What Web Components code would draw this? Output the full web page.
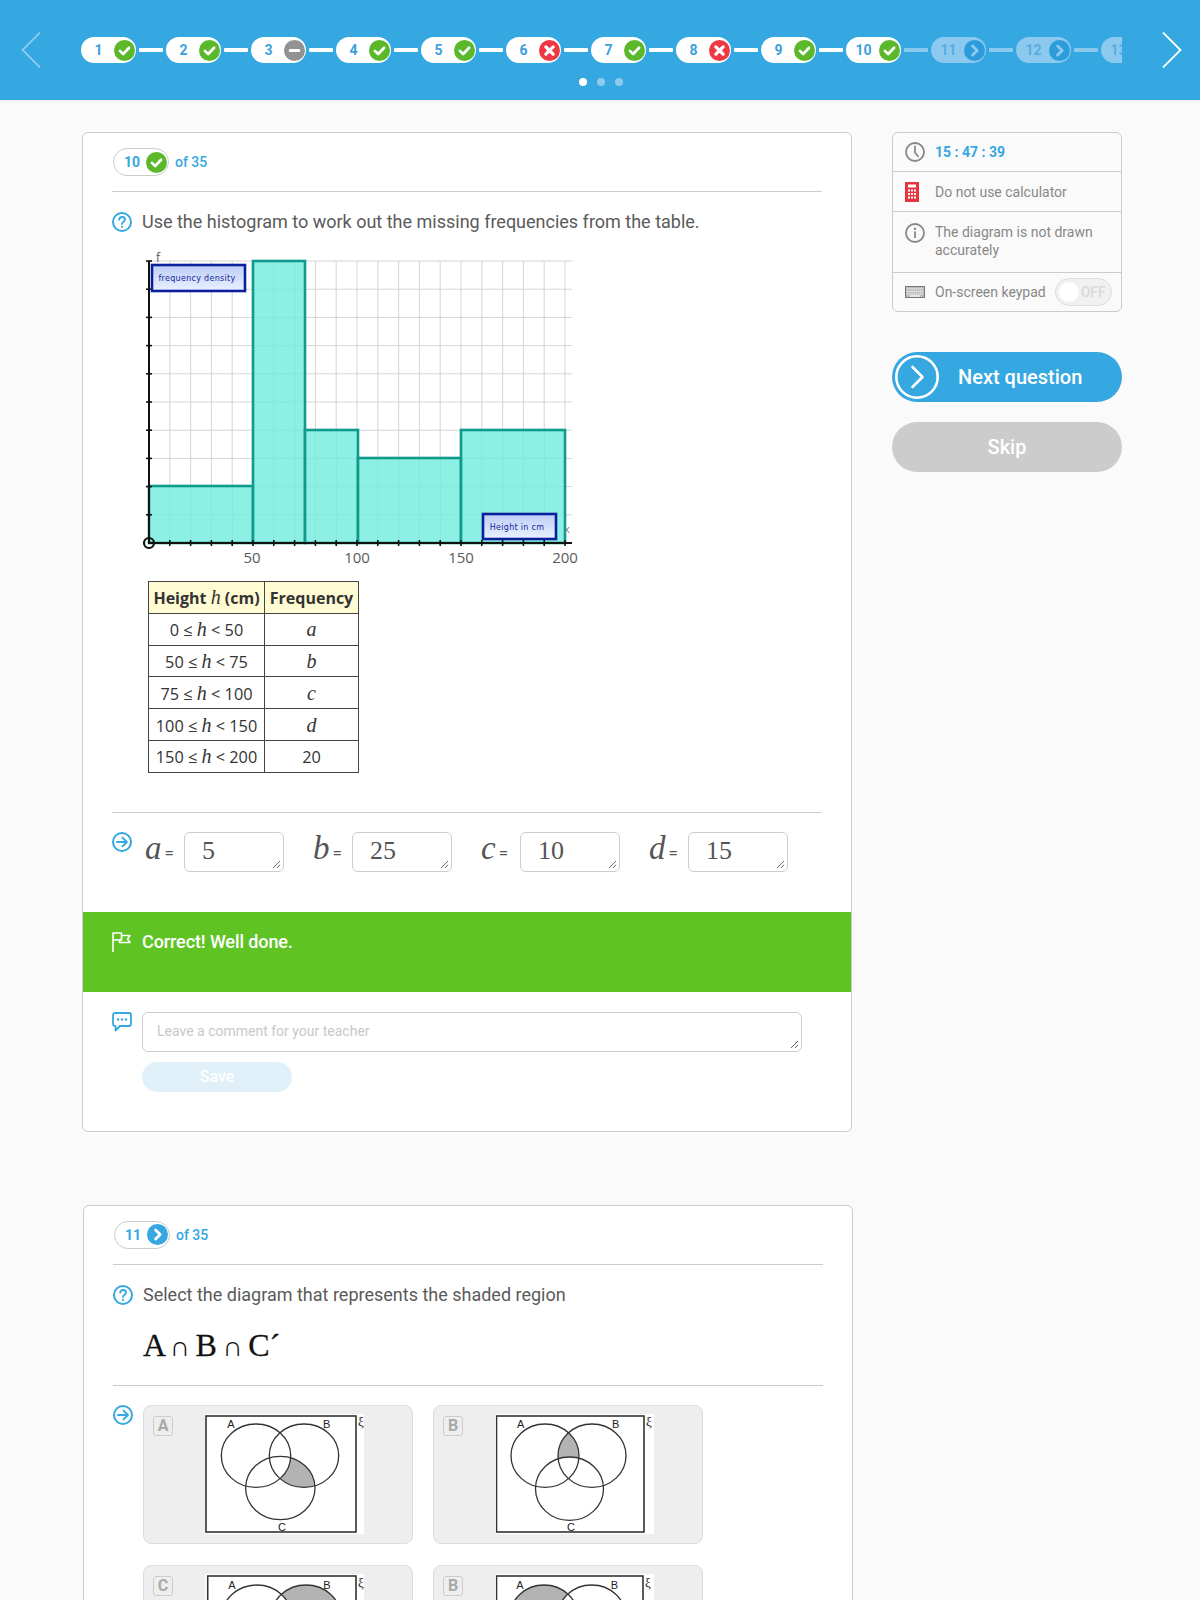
<!DOCTYPE html>
<html lang="en">
<head>
<meta charset="utf-8">
<title>Quiz</title>
<style>
html,body{margin:0;padding:0;height:1600px;overflow:hidden;background:#fafafa;font-family:Roboto,"Liberation Sans",sans-serif;color:#555}
</style>
</head>
<body>
<quiz-header>
  <step-pill n="1" state="ok"></step-pill><step-link></step-link>
  <step-pill n="2" state="ok"></step-pill><step-link></step-link>
  <step-pill n="3" state="skip"></step-pill><step-link></step-link>
  <step-pill n="4" state="ok"></step-pill><step-link></step-link>
  <step-pill n="5" state="ok"></step-pill><step-link></step-link>
  <step-pill n="6" state="bad"></step-pill><step-link></step-link>
  <step-pill n="7" state="ok"></step-pill><step-link></step-link>
  <step-pill n="8" state="bad"></step-pill><step-link></step-link>
  <step-pill n="9" state="ok"></step-pill><step-link></step-link>
  <step-pill n="10" state="ok"></step-pill><step-link faded></step-link>
  <step-pill n="11" state="next"></step-pill><step-link faded></step-link>
  <step-pill n="12" state="next"></step-pill><step-link faded></step-link>
  <step-pill n="13" state="next"></step-pill>
</quiz-header>

<quiz-page>
  <div slot="main">
    <question-card n="10" state="ok">
      <q-line>Use the histogram to work out the missing frequencies from the table.</q-line>
      <histogram-chart></histogram-chart>
      <freq-table></freq-table>
      <q-rule style="margin-top:39px"></q-rule>
      <answer-row>
        <answer-field label="a" value="5"></answer-field>
        <answer-field label="b" value="25"></answer-field>
        <answer-field label="c" value="10"></answer-field>
        <answer-field label="d" value="15"></answer-field>
      </answer-row>
      <feedback-band>Correct! Well done.</feedback-band>
      <comment-box></comment-box>
    </question-card>
    <question-card n="11" state="next" style="margin:73px 0 0 1px">
      <q-line>Select the diagram that represents the shaded region</q-line>
      <set-formula>A <span>∩</span> B <span>∩</span> C´</set-formula>
      <q-rule></q-rule>
      <option-grid>
        <venn-option letter="A" shade="bc-a" left="62" w="159" rect="1 2 150 116" a="51 41.7" b="99 41.7" c="75.3 74" rx="34.7" la="26 14" lb="121.7 14" lc="77 117" lx="156 12"></venn-option>
        <venn-option letter="B" shade="ab-c" left="63" w="158" rect="0.5 2 147.5 116" a="49 41.7" b="96 41.7" c="73.5 74.7" rx="34" la="24.7 14" lb="119.7 14" lc="75 117" lx="153 12"></venn-option>
        <venn-option letter="C" shade="b-ac" left="62" w="159" rect="2.7 2 148.3 116" a="51.7 42.7" b="101 42.7" c="77 75" rx="34.7" la="27 15" lb="122 15" lx="156 13"></venn-option>
        <venn-option letter="B" shade="a-bc" left="63" w="158" rect="0.5 2 146.5 116" a="48 42.7" b="95.7 42.7" c="73 75" rx="34" la="24 15" lb="118.3 15" lx="152 13"></venn-option>
      </option-grid>
    </question-card>
  </div>
  <div slot="side">
    <info-panel></info-panel>
    <big-button kind="next" style="margin-top:40px">Next question</big-button>
    <big-button kind="skip" style="margin-top:20px">Skip</big-button>
  </div>
</quiz-page>

<script>
const BLUE = '#35a7e1';
const ICONS = {
  ok: `<circle cx="11" cy="11" r="11" fill="#5cb82b"/><path d="M6.2 11.4l3.4 3.3 6.2-6.6" fill="none" stroke="#fff" stroke-width="2.8" stroke-linecap="round" stroke-linejoin="round"/>`,
  bad: `<circle cx="11" cy="11" r="11" fill="#ee3842"/><path d="M7.2 7.2l7.6 7.6M14.8 7.2l-7.6 7.6" fill="none" stroke="#fff" stroke-width="3.4" stroke-linecap="round"/>`,
  skip: `<circle cx="11" cy="11" r="11" fill="#929292"/><path d="M6.5 11h9" fill="none" stroke="#fff" stroke-width="3.2" stroke-linecap="round"/>`,
  next: `<circle cx="11" cy="11" r="11" fill="#2e9cdb"/><path d="M9 6.2l4.8 4.8L9 15.8" fill="none" stroke="#8fc9ee" stroke-width="3" stroke-linecap="round" stroke-linejoin="round"/>`,
  nextsolid: `<circle cx="11" cy="11" r="11" fill="#35a7e1"/><path d="M9 6.2l4.8 4.8L9 15.8" fill="none" stroke="#fff" stroke-width="3" stroke-linecap="round" stroke-linejoin="round"/>`
};
function glyph(name, size){return `<svg width="${size}" height="${size}" viewBox="0 0 22 22" aria-hidden="true">${ICONS[name]}</svg>`;}
const LINE = {
  question:`<svg width="20" height="20" viewBox="0 0 20 20"><circle cx="10" cy="10" r="9" fill="none" stroke="${BLUE}" stroke-width="2"/><path d="M7.2 7.7C7.3 6 8.5 5 10.1 5c1.7 0 2.9 1 2.9 2.5 0 2.3-3 2.3-3 4.6" fill="none" stroke="${BLUE}" stroke-width="1.8" stroke-linecap="round"/><circle cx="10" cy="14.8" r="1.1" fill="${BLUE}"/></svg>`,
  arrow:`<svg width="20" height="20" viewBox="0 0 20 20"><circle cx="10" cy="10" r="9" fill="none" stroke="${BLUE}" stroke-width="2"/><path d="M5 10h9.5M10.5 5.6l4.4 4.4-4.4 4.4" fill="none" stroke="${BLUE}" stroke-width="2" stroke-linecap="round" stroke-linejoin="round"/></svg>`,
  flag:`<svg width="20" height="20" viewBox="0 0 20 20"><path d="M1 20V1h8.500v2.500H18l-2.500 3.500 2.500 3.500H7.500V7.500" fill="none" stroke="#fff" stroke-width="1.600" stroke-linejoin="round"/><path d="M1 8h8.500V3.500" fill="none" stroke="#fff" stroke-width="1.600"/></svg>`,
  comment:`<svg width="20" height="20" viewBox="0 0 20 20"><path d="M3 1h14a2 2 0 0 1 2 2v9a2 2 0 0 1-2 2H8l-4.500 4.500V14H3a2 2 0 0 1-2-2V3a2 2 0 0 1 2-2z" fill="none" stroke="${BLUE}" stroke-width="1.8" stroke-linejoin="round"/><circle cx="6" cy="7.500" r="1.200" fill="${BLUE}"/><circle cx="10" cy="7.500" r="1.200" fill="${BLUE}"/><circle cx="14" cy="7.500" r="1.200" fill="${BLUE}"/></svg>`,
  clock:`<svg width="20" height="20" viewBox="0 0 20 20"><circle cx="10" cy="10" r="9" fill="none" stroke="#888" stroke-width="1.8"/><path d="M10 4.500V10.500l3 3.800" fill="none" stroke="#888" stroke-width="1.800" stroke-linecap="round"/></svg>`,
  calc:`<svg width="14" height="20" viewBox="0 0 14 20"><rect width="14" height="20" fill="#e2373f"/><rect x="3" y="2.500" width="8" height="3" fill="#fff"/><g fill="#fff"><rect x="3" y="7.500" width="2" height="2"/><rect x="6" y="7.500" width="2" height="2"/><rect x="9" y="7.500" width="2" height="2"/><rect x="3" y="11" width="2" height="2"/><rect x="6" y="11" width="2" height="2"/><rect x="9" y="11" width="2" height="2"/><rect x="3" y="14.500" width="2" height="2"/><rect x="6" y="14.500" width="2" height="2"/><rect x="9" y="14.500" width="2" height="2"/></g></svg>`,
  info:`<svg width="20" height="20" viewBox="0 0 20 20"><circle cx="10" cy="10" r="9" fill="none" stroke="#888" stroke-width="1.800"/><circle cx="10" cy="5.800" r="1.200" fill="#888"/><path d="M10 8.500v6.500" stroke="#888" stroke-width="1.800"/></svg>`,
  keys:`<svg width="20" height="12" viewBox="0 0 20 12"><rect x="0.500" y="0.500" width="19" height="11" fill="#bbb" stroke="#777"/><path d="M2 3h16M2 5.500h16M2 8h16" stroke="#fff" stroke-width="1.200" stroke-dasharray="1.400 .8"/><path d="M5 10h10" stroke="#fff" stroke-width="1.200"/></svg>`
};

function define(tag, css, html, init){
  customElements.define(tag, class extends HTMLElement{
    constructor(){super();this.attachShadow({mode:'open'});}
    connectedCallback(){
      const body = typeof html==='function' ? html(this) : html;
      this.shadowRoot.innerHTML = `<style>${css}</style>${body}`;
      if(init) init(this);
    }
  });
}

define('quiz-header',`
  :host{display:block;height:100px;background:${BLUE};box-shadow:0 2px 4px rgba(0,0,0,.05);position:relative}
  .row{display:grid;grid-template-columns:81px 1041px 78px;padding-top:32px;height:36px}
  .track{display:flex;align-items:center;overflow:hidden;height:36px}
  .l{padding-left:21px}.r{padding-left:40px}
  svg{display:block}
  .dots{display:flex;justify-content:center;gap:10px;margin-top:10px;padding-left:2px}
  .dots i{display:block;width:8px;height:8px;border-radius:50%;background:#8dcbf0}
  .dots i:first-child{background:#fff}
`,`
  <div class="row">
    <div class="l"><svg width="20" height="36" viewBox="0 0 20 36"><path d="M19 .5L1.500 18 19 35.500" fill="none" stroke="#8dcbf0" stroke-width="1.800"/></svg></div>
    <div class="track"><slot></slot></div>
    <div class="r"><svg width="20" height="36" viewBox="0 0 20 36"><path d="M1 .5L18.500 18 1 35.500" fill="none" stroke="#fff" stroke-width="1.800"/></svg></div>
  </div>
  <div class="dots"><i></i><i></i><i></i></div>
`);

define('step-pill',`
  :host{display:flex;flex:none;align-items:center;width:55px;height:26px;border-radius:13px;background:#fff;
        font:700 14px Roboto,sans-serif;color:#3c9fdd}
  :host([state=next]){background:#8bc9ef;color:#57ade3}
  span{width:31px;margin-left:2px;text-align:center}
  svg{display:block;flex:none}
`, el=>`<span>${el.getAttribute('n')}</span>${glyph(el.getAttribute('state'),21)}`);

define('step-link',`
  :host{display:block;flex:none;width:24px;height:4px;margin:0 3px;background:#fff;border-radius:1px}
  :host([faded]){background:#8bc9ef}
`,'');

define('quiz-page',`
  :host{display:flex;align-items:flex-start;padding:32px 0 0 82px;gap:40px}
  .m{width:770px;flex:none}.s{width:230px;flex:none}
`,`<div class="m"><slot name="main"></slot></div><div class="s"><slot name="side"></slot></div>`);

define('question-card',`
  :host{display:block;width:770px;box-sizing:border-box;background:#fff;border:1px solid #ccc;border-radius:6px;padding-bottom:39px}
  header{display:flex;align-items:center;gap:6px;margin:15px 29px 15px 30px;font:500 14px Roboto,sans-serif;color:${BLUE}}
  .badge{display:flex;align-items:center;box-sizing:border-box;width:56px;height:28px;border:1px solid #ccc;border-radius:14px;padding-left:10px;gap:6px;font-weight:700}
  .badge svg{display:block;flex:none}
  hr{border:0;height:1px;background:#ccc;margin:0 29px 20px}
`, el=>`<header><div class="badge"><span>${el.getAttribute('n')}</span>${glyph(el.getAttribute('state')==='next'?'nextsolid':'ok',21)}</div><span>of 35</span></header><hr><slot></slot>`);

define('q-line',`
  :host{display:flex;align-items:center;gap:10px;margin:0 29px;font:400 18px/20px Roboto,sans-serif;color:#5a5a5a}
  svg{display:block;flex:none}
`,`${LINE.question}<span><slot></slot></span>`);

define('q-rule',`:host{display:block;height:1px;background:#ccc;margin:0 29px}`,'');

define('histogram-chart',`
  :host{display:block;margin:13px 0 0 57px;width:450px;height:330px}
  svg{display:block}
  text{font-family:"Open Sans",sans-serif}
`,()=>{
  const X0=149,Y0=543,Yt=261,dx=20.8,dy=28.2;
  let g='',t='';
  for(let i=1;i<=20;i++){const x=X0+i*dx;g+=`<path d="M${x} ${Yt}V${Y0}"/>`;t+=`<path d="M${x} ${Y0-3}v6"/>`;}
  for(let j=0;j<10;j++){const y=Y0-(j+1)*dy;g+=`<path d="M${X0} ${y}H572"/>`;t+=`<path d="M146 ${y}h6"/>`;}
  const bar=(a,b,y)=>`<rect x="${a}" y="${y}" width="${b-a}" height="${Y0-y}"/>`;
  const lab=(v,x)=>`<text x="${x}" y="563" text-anchor="middle" font-size="15" fill="#5a5a5a">${v}</text>`;
  return `<svg width="450" height="330" viewBox="140 245 450 330">
    <defs><linearGradient id="lg" x1="0" y1="0" x2="0" y2="1"><stop offset="0" stop-color="#bccdf6"/><stop offset="1" stop-color="#eaf2ff"/></linearGradient></defs>
    <g stroke="#d4d4d4" stroke-width="1">${g}</g>
    <g fill="#72ecdd" fill-opacity=".8" stroke="#0f9a8e" stroke-width="2.600">
      ${bar(149,253,486)}${bar(253,305,261)}${bar(305,358,430)}${bar(358,461,458)}${bar(461,565,430)}
    </g>
    <path d="M149 261V543H572" fill="none" stroke="#111" stroke-width="2"/>
    <g stroke="#111" stroke-width="1.600">${t}</g>
    <circle cx="149" cy="543" r="5" fill="none" stroke="#111" stroke-width="2.200"/>
    <text x="156" y="262" font-size="12" fill="#555">f</text>
    <text x="564" y="533" font-size="11" fill="#888">x</text>
    <rect x="152" y="265" width="93" height="26" fill="url(#lg)" stroke="#0b1f9c" stroke-width="2.600"/>
    <text x="197" y="281" text-anchor="middle" font-size="8" letter-spacing=".3" fill="#14259a" style="font-family:'DejaVu Sans',sans-serif">frequency density</text>
    <rect x="483" y="514" width="73" height="25" fill="url(#lg)" stroke="#0b1f9c" stroke-width="2.600"/>
    <text x="517" y="530" text-anchor="middle" font-size="8" letter-spacing=".3" fill="#14259a" style="font-family:'DejaVu Sans',sans-serif">Height in cm</text>
    ${lab(50,252)}${lab(100,357)}${lab(150,461)}${lab(200,565)}
  </svg>`;
});

define('freq-table',`
  :host{display:block;margin:6px 0 0 65px;width:210px}
  table{border-collapse:collapse;table-layout:fixed;width:210px;font:400 16.3px "Open Sans",sans-serif;color:#333}
  td,th{border:1px solid #444;padding:2px 0 0;height:28.800px;text-align:center;white-space:nowrap}
  th{background:#fffbd2;font-weight:700;font-size:16px;color:#333}
  i{font-family:"Liberation Serif",serif;font-size:20px;font-style:italic;font-weight:400;line-height:16px}
`,`<table><colgroup><col style="width:116px"><col style="width:94px"></colgroup>
  <tr><th>Height <i>h</i> (cm)</th><th>Frequency</th></tr>
  <tr><td>0 ≤ <i>h</i> &lt; 50</td><td><i>a</i></td></tr>
  <tr><td>50 ≤ <i>h</i> &lt; 75</td><td><i>b</i></td></tr>
  <tr><td>75 ≤ <i>h</i> &lt; 100</td><td><i>c</i></td></tr>
  <tr><td>100 ≤ <i>h</i> &lt; 150</td><td><i>d</i></td></tr>
  <tr><td>150 ≤ <i>h</i> &lt; 200</td><td>20</td></tr>
</table>`);

define('answer-row',`
  :host{display:flex;align-items:flex-start;padding:19px 0 0 29px;height:80px}
  svg{display:block;flex:none}
  .f{display:flex;gap:29px;margin-left:13px}
`,`${LINE.arrow}<div class="f"><slot></slot></div>`);

const GRIP = `<svg width="9" height="9" viewBox="0 0 9 9" style="position:absolute;right:2px;bottom:2px;display:block"><path d="M1 8L8 1M5 8l3-3" stroke="#666" stroke-width="1"/></svg>`;

define('answer-field',`
  :host{display:flex;align-items:center;flex:none;height:40px;color:#555}
  .lab{width:39px;box-sizing:border-box;padding-bottom:8px;font:italic 400 33px/32px "Liberation Serif",serif;white-space:nowrap}
  .lab b{font:400 17px Roboto,sans-serif;margin-left:3px}
  .box{position:relative;box-sizing:border-box;width:100px;height:40px;border:1px solid #ccc;border-radius:6px;padding-left:17px;
       font:400 26px/35px "Liberation Serif",serif;color:#555}
`, el=>`<div class="lab">${el.getAttribute('label')}<b>=</b></div><div class="box">${el.getAttribute('value')}${GRIP}</div>`);

define('feedback-band',`
  :host{display:flex;gap:10px;height:40px;padding:20px 29px;margin-top:0;background:#5fc423;color:#fff;font:500 18px/20px Roboto,sans-serif;letter-spacing:-.1px}
  svg{display:block;flex:none}
`,`${LINE.flag}<span><slot></slot></span>`);

define('comment-box',`
  :host{display:flex;gap:10px;padding:20px 0 0 29px}
  svg{display:block;flex:none}
  .box{position:relative;box-sizing:border-box;width:660px;height:40px;border:1px solid #ccc;border-radius:6px;padding-left:14px;
       font:400 14px/36px Roboto,sans-serif;color:#c8c8c8}
  .save{display:flex;align-items:center;justify-content:center;width:150px;height:30px;margin-top:10px;border-radius:15px;background:#dff0f8;color:#fff;font:500 16px Roboto,sans-serif}
`,`${LINE.comment}<div><div class="box">Leave a comment for your teacher${GRIP}</div><div class="save">Save</div></div>`);

define('set-formula',`
  :host{display:block;margin:18px 0 0 59px;height:62px;font:400 32px/44px "Liberation Serif",serif;color:#111;white-space:nowrap;word-spacing:-2.500px;-webkit-text-stroke:.3px #111}
  ::slotted(span){font-size:28px;-webkit-text-stroke:0}
`,`<slot></slot>`);

define('option-grid',`
  :host{display:flex;gap:10px;padding:19px 0 0 29px}
  svg{display:block;flex:none}
  .g{display:grid;grid-template-columns:270px 270px;gap:21px 20px}
`,`${LINE.arrow}<div class="g"><slot></slot></div>`);

define('venn-option',`
  :host{display:flex;align-items:flex-start;box-sizing:border-box;width:270px;height:139px;background:#eee;border:1px solid #ddd;border-radius:8px;padding:8px 0 0 9px}
  .k{flex:none;box-sizing:border-box;width:20px;height:20px;margin-top:2px;border:1px solid #ccc;border-radius:3px;text-align:center;font:700 16px/18px Roboto,sans-serif;color:#a9a9a9}
  svg{display:block;flex:none;background:#fff}
  text{font:400 11px "Liberation Sans",sans-serif;fill:#222}
`, el=>{
  const p=n=>el.getAttribute(n).split(' ');
  const [ax,ay]=p('a'),[bx,by]=p('b'),[cx,cy]=p('c');
  const rx=el.getAttribute('rx'),ry='31.7',w=+el.getAttribute('w'),left=+el.getAttribute('left');
  const [rxx,rxy,rw,rh]=p('rect');
  const E=(x,y,extra)=>`<ellipse cx="${x}" cy="${y}" rx="${rx}" ry="${ry}" ${extra}/>`;
  const A=e=>E(ax,ay,e),B=e=>E(bx,by,e),C=e=>E(cx,cy,e);
  const grey='fill="#b3b3b3"',white='fill="#fff"';
  const shades={
    'bc-a':`<g clip-path="url(#cb)">${C(grey)}${A(white)}</g>`,
    'ab-c':`<g clip-path="url(#ca)">${B(grey)}${C(white)}</g>`,
    'b-ac':`${B(grey)}${A(white)}${C(white)}`,
    'a-bc':`${A(grey)}${B(white)}${C(white)}`
  };
  const lbl=(n,s)=>{if(!el.hasAttribute(n))return '';const [x,y]=p(n);return `<text x="${x}" y="${y}" text-anchor="middle">${s}</text>`;};
  const [xx,xy]=p('lx');
  const line='fill="none" stroke="#333" stroke-width="1.300"';
  return `<div class="k">${el.getAttribute('letter')}</div>
  <svg width="${w}" height="120" viewBox="0 0 ${w} 120" style="margin-left:${left-30}px">
    <defs><clipPath id="ca">${A('')}</clipPath><clipPath id="cb">${B('')}</clipPath></defs>
    ${shades[el.getAttribute('shade')]}
    <rect x="${rxx}" y="${rxy}" width="${rw}" height="${rh}" fill="none" stroke="#333" stroke-width="1.600"/>
    ${A(line)}${B(line)}${C(line)}
    ${lbl('la','A')}${lbl('lb','B')}${lbl('lc','C')}
    <text x="${xx}" y="${xy}" text-anchor="middle" style="font:400 13px 'Liberation Serif',serif">ξ</text>
  </svg>`;
});

define('info-panel',`
  :host{display:block;box-sizing:border-box;width:230px;height:180px;border:1px solid #ccc;border-radius:6px;font:400 14px/18px Roboto,sans-serif;color:#888}
  .r{display:flex;align-items:center;box-sizing:border-box;padding-left:12px;border-bottom:1px solid #ccc}
  .r:last-child{border-bottom:0}
  .i{flex:none;width:30px;display:flex}
  svg{display:block}
  .t{font-weight:700;color:${BLUE}}
  .top{align-items:flex-start;padding-top:11px}
  .tog{position:relative;box-sizing:border-box;width:57px;height:28px;margin-left:9px;border:1px solid #ddd;border-radius:14px;background:#f1f1f1;
       font:500 14px/26px Roboto,sans-serif;color:#d9d9d9;text-align:right;padding-right:5px}
  .tog::before{content:"";position:absolute;left:3px;top:3px;width:20px;height:20px;border-radius:50%;background:#fff}
`,`
  <div class="r" style="height:39px"><div class="i">${LINE.clock}</div><span class="t">15 : 47 : 39</span></div>
  <div class="r" style="height:40px"><div class="i">${LINE.calc}</div><span>Do not use calculator</span></div>
  <div class="r top" style="height:61px"><div class="i">${LINE.info}</div><span>The diagram is not drawn<br>accurately</span></div>
  <div class="r" style="height:38px"><div class="i">${LINE.keys}</div><span>On-screen keypad</span><div class="tog">OFF</div></div>
`);

define('big-button',`
  :host{display:flex;align-items:center;box-sizing:border-box;width:230px;height:50px;border-radius:25px;background:${BLUE};color:#fff;font:500 20px Roboto,sans-serif}
  :host([kind=skip]){background:#ccc;justify-content:center}
  svg{display:block;flex:none;margin:0 19px 0 3px}
`, el=>`${el.getAttribute('kind')==='next'?`<svg width="44" height="44" viewBox="0 0 44 44"><circle cx="22" cy="22" r="20.700" fill="none" stroke="#fff" stroke-width="2.600"/><path d="M17.500 12l10 10-10 10" fill="none" stroke="#fff" stroke-width="2.600" stroke-linecap="round" stroke-linejoin="round"/></svg>`:''}<span><slot></slot></span>`);
</script>
</body>
</html>
